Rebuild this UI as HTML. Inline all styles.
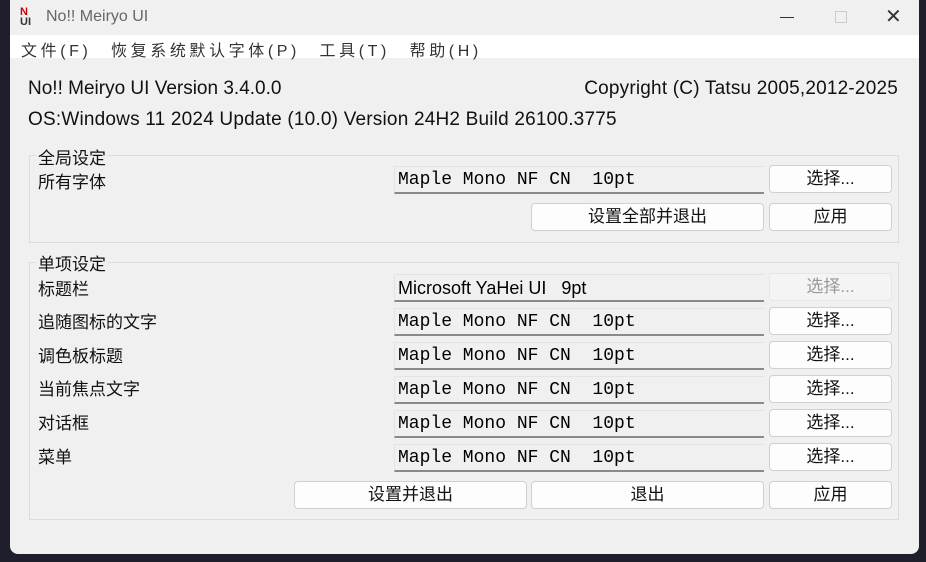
<!DOCTYPE html><html><head><meta charset="utf-8"><style>
body{margin:0;width:926px;height:562px;background:#1e1f2b;position:relative;overflow:hidden;font-family:"Liberation Sans","Noto Sans CJK SC",sans-serif;}
.win{position:absolute;left:10px;top:0;width:909px;height:554px;background:#f0f0f0;border-radius:0 0 8px 8px;}
.a{position:absolute;white-space:nowrap;}
.t{font-size:17px;color:#111;}
.box{position:absolute;border:1px solid #dcdcdc;}
.fld{position:absolute;left:384px;width:370px;background:#f0f0f0;border-bottom:2px solid #8a8a8a;border-top:1px solid #e4e4e4;border-left:1px solid #e4e4e4;font-family:"Liberation Mono","Noto Sans CJK SC",monospace;font-size:18px;line-height:26px;padding-left:3px;box-sizing:border-box;height:28px;white-space:pre;}
.btn{position:absolute;height:28px;background:#fdfdfd;border:1px solid #d0d0d0;border-radius:4px;box-sizing:border-box;text-align:center;font-size:17px;line-height:26px;color:#111;}
</style></head><body>
<div class="win">
<div class="a" style="left:10px;top:7px;width:18px;height:20px;font-size:11px;font-weight:bold;color:#c00;line-height:10px">N<br><span style="color:#333">UI</span></div>
<div class="a" style="left:36px;top:8px;font-size:16px;color:#666">No!! Meiryo UI</div>
<div class="a" style="left:770px;top:17px;width:14px;height:1px;background:#333"></div>
<div class="a" style="left:825px;top:11px;width:10px;height:10px;border:1px solid #ccc"></div>
<div class="a" style="left:875px;top:4px;font-size:20px;color:#333">✕</div>
<div class="a" style="left:0;top:35px;width:909px;height:23px;background:#fff"></div>
<div class="a" style="left:11px;top:37px;font-size:16px;color:#333;letter-spacing:3.6px;word-spacing:10px">文件(F)　恢复系统默认字体(P)　工具(T)　帮助(H)</div>
<div class="a t" style="left:18px;top:78px;font-size:19px">No!! Meiryo UI Version 3.4.0.0</div>
<div class="a t" style="right:21px;top:78px;font-size:19px;letter-spacing:0.2px">Copyright (C) Tatsu 2005,2012-2025</div>
<div class="a t" style="left:18px;top:109px;font-size:19px;letter-spacing:0.2px">OS:Windows 11 2024 Update (10.0) Version 24H2 Build 26100.3775</div>
<div class="box" style="left:19px;top:155px;width:868px;height:86px"></div>
<div class="a t" style="left:26px;top:144px;background:#f0f0f0;padding:0 2px">全局设定</div>
<div class="a t" style="left:28px;top:168px">所有字体</div>
<div class="fld" style="top:166px">Maple Mono NF CN  10pt</div>
<div class="btn" style="left:759px;top:165px;width:123px">选择...</div>
<div class="btn" style="left:521px;top:203px;width:233px">设置全部并退出</div>
<div class="btn" style="left:759px;top:203px;width:123px">应用</div>
<div class="box" style="left:19px;top:262px;width:868px;height:256px"></div>
<div class="a t" style="left:26px;top:250px;background:#f0f0f0;padding:0 2px">单项设定</div>
<div class="a t" style="left:28px;top:275px">标题栏</div>
<div class="fld" style="top:274px;font-family:'Liberation Sans','Noto Sans CJK SC',sans-serif;font-size:18px">Microsoft YaHei UI   9pt</div>
<div class="btn" style="left:759px;top:273px;width:123px;background:#f4f4f4;border-color:#e6e6e6;color:#999">选择...</div>
<div class="a t" style="left:28px;top:308px">追随图标的文字</div>
<div class="fld" style="top:308px">Maple Mono NF CN  10pt</div>
<div class="btn" style="left:759px;top:307px;width:123px">选择...</div>
<div class="a t" style="left:28px;top:342px">调色板标题</div>
<div class="fld" style="top:342px">Maple Mono NF CN  10pt</div>
<div class="btn" style="left:759px;top:341px;width:123px">选择...</div>
<div class="a t" style="left:28px;top:375px">当前焦点文字</div>
<div class="fld" style="top:376px">Maple Mono NF CN  10pt</div>
<div class="btn" style="left:759px;top:375px;width:123px">选择...</div>
<div class="a t" style="left:28px;top:409px">对话框</div>
<div class="fld" style="top:410px">Maple Mono NF CN  10pt</div>
<div class="btn" style="left:759px;top:409px;width:123px">选择...</div>
<div class="a t" style="left:28px;top:443px">菜单</div>
<div class="fld" style="top:444px">Maple Mono NF CN  10pt</div>
<div class="btn" style="left:759px;top:443px;width:123px">选择...</div>
<div class="btn" style="left:284px;top:481px;width:233px">设置并退出</div>
<div class="btn" style="left:521px;top:481px;width:233px">退出</div>
<div class="btn" style="left:759px;top:481px;width:123px">应用</div>
</div>
</body></html>
